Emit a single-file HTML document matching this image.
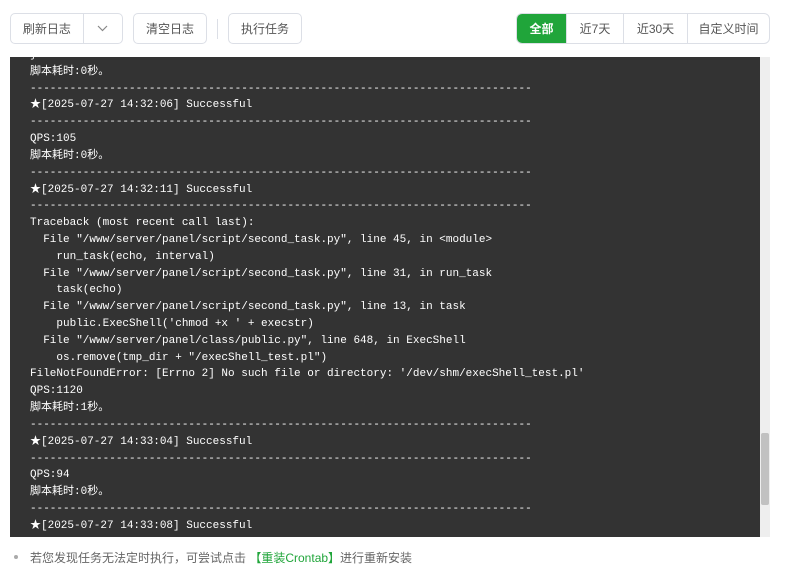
<!DOCTYPE html>
<html><head><meta charset="utf-8"><style>
body{margin:0;width:787px;height:569px;background:#fff;font-family:"Liberation Sans","Noto Sans CJK SC",sans-serif;position:relative;overflow:hidden}
.btn{position:absolute;top:13px;height:31px;box-sizing:border-box;border:1px solid #dcdfe6;border-radius:5px;font-size:12px;color:#555;display:flex;align-items:center;justify-content:center;background:#fff}
.seg{position:absolute;top:13px;left:516px;width:254px;height:31px;box-sizing:border-box;border:1px solid #dcdfe6;border-radius:6px;display:flex;overflow:hidden;font-size:12px;color:#555}
.seg div{display:flex;align-items:center;justify-content:center;border-left:1px solid #dcdfe6}
.seg div:first-child{border-left:none;background:#20a53a;color:#fff;font-weight:bold}
.log{position:absolute;left:10px;top:57px;width:760px;height:480px;background:#333;overflow:hidden}
pre{margin:0;position:absolute;left:20px;top:-10px;font-family:"Liberation Mono","Noto Sans CJK SC",monospace;font-size:11px;line-height:16.81px;color:#fff}
.sb{position:absolute;right:0;top:0;width:10px;height:480px;background:#eee}
.th{position:absolute;right:1px;top:376px;width:8px;height:72px;background:#c1c1c1;border-radius:2px}
.note{position:absolute;left:30px;top:549px;font-size:12px;color:#666}
.dot{position:absolute;left:14px;top:555px;width:4px;height:4px;border-radius:50%;background:#aaa}
</style></head><body>
<div class="btn" style="left:10px;width:113px;justify-content:flex-start"><span style="width:73px;text-align:center">刷新日志</span><span style="border-left:1px solid #dcdfe6;height:29px;width:39px;display:flex;align-items:center;justify-content:center"><svg width="11" height="7" viewBox="0 0 11 7"><path d="M1 1l4.5 4.5L10 1" fill="none" stroke="#888" stroke-width="1.2"/></svg></span></div>
<div class="btn" style="left:133px;width:74px">清空日志</div>
<div style="position:absolute;left:217px;top:19px;width:1px;height:20px;background:#dcdfe6"></div>
<div class="btn" style="left:228px;width:74px">执行任务</div>
<div class="seg"><div style="width:49px">全部</div><div style="width:56px">近7天</div><div style="width:63px">近30天</div><div style="flex:1">自定义时间</div></div>
<div class="log"><pre>}
脚本耗时:0秒。
----------------------------------------------------------------------------
★[2025-07-27 14:32:06] Successful
----------------------------------------------------------------------------
QPS:105
脚本耗时:0秒。
----------------------------------------------------------------------------
★[2025-07-27 14:32:11] Successful
----------------------------------------------------------------------------
Traceback (most recent call last):
  File "/www/server/panel/script/second_task.py", line 45, in &lt;module&gt;
    run_task(echo, interval)
  File "/www/server/panel/script/second_task.py", line 31, in run_task
    task(echo)
  File "/www/server/panel/script/second_task.py", line 13, in task
    public.ExecShell('chmod +x ' + execstr)
  File "/www/server/panel/class/public.py", line 648, in ExecShell
    os.remove(tmp_dir + "/execShell_test.pl")
FileNotFoundError: [Errno 2] No such file or directory: '/dev/shm/execShell_test.pl'
QPS:1120
脚本耗时:1秒。
----------------------------------------------------------------------------
★[2025-07-27 14:33:04] Successful
----------------------------------------------------------------------------
QPS:94
脚本耗时:0秒。
----------------------------------------------------------------------------
★[2025-07-27 14:33:08] Successful
</pre><div class="sb"><div class="th"></div></div></div>
<div class="dot"></div>
<div class="note">若您发现任务无法定时执行，可尝试点击 <span style="color:#20a53a">【重装Crontab】</span>进行重新安装</div>
</body></html>
